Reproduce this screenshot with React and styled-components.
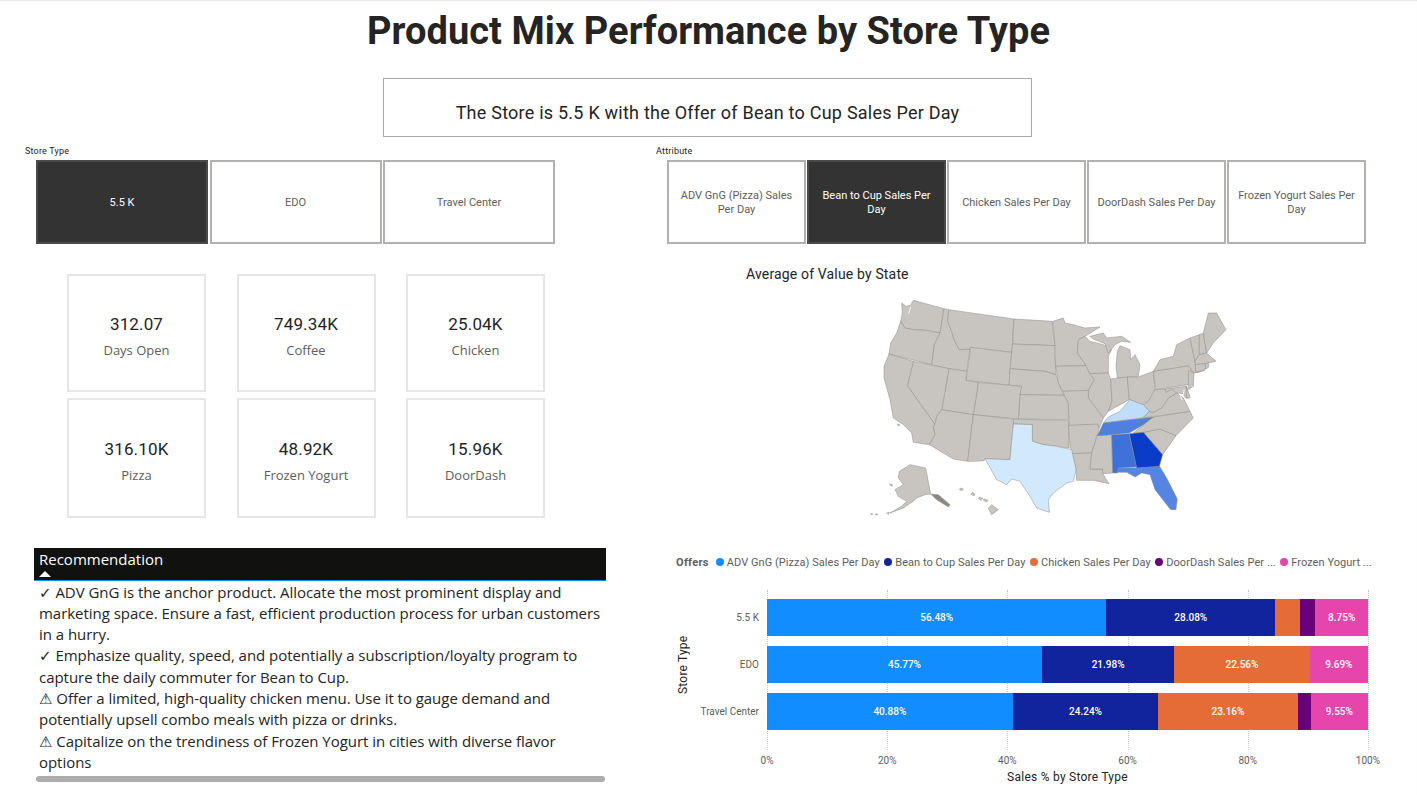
import React from "react";
import styled, { createGlobalStyle } from "styled-components";

const din = `"Roboto", "Liberation Sans", sans-serif`;
const segoe = `"Open Sans", "Noto Sans", "DejaVu Sans", sans-serif`;

const Global = createGlobalStyle`
  html, body { margin: 0; padding: 0; background: #fff; }
  body { font-family: ${din}; overflow: hidden; }
`;

const Page = styled.div`
  width: 1417px;
  height: 795px;
  overflow: hidden;
  background: #fff;
  box-shadow: inset 0 2px 2px -1px #e4e4e4;
`;
const Title = styled.h1`
  margin: 0;
  height: 78px;
  padding-top: 9px;
  box-sizing: border-box;
  text-align: center;
  font-size: 38px;
  line-height: 45px;
  font-weight: 700;
  letter-spacing: 0.05px;
  color: #252423;
`;
const Banner = styled.div`
  width: 649px;
  height: 59px;
  box-sizing: border-box;
  margin-left: 383px;
  border: 1px solid #aaa8a6;
  padding-top: 24px;
  text-align: center;
  font-size: 18px;
  line-height: 20px;
  letter-spacing: 0.23px;
  color: #252423;
`;
const Columns = styled.div`
  display: grid;
  grid-template-columns: 631px 1fr;
  padding-top: 9px;
`;
const LeftCol = styled.div`
  padding-left: 25px;
`;
const RightCol = styled.div`
  padding-left: 25px;
`;
const SlicerLabel = styled.div`
  height: 14px;
  font-size: 9px;
  line-height: 10px;
  letter-spacing: 0.2px;
  box-sizing: border-box;
  color: #252423;
`;
const SlicerRow = styled.div`
  display: flex;
  gap: ${(p) => p.$gap}px;
  margin-left: 11px;
`;
const SlicerButton = styled.div`
  width: ${(p) => p.$w}px;
  height: 84px;
  box-sizing: border-box;
  border: 2px solid #b3b1af;
  display: flex;
  align-items: center;
  justify-content: center;
  text-align: center;
  padding: 2px 6px 0;
  font-size: 11px;
  line-height: 14px;
  background: ${(p) => (p.$on ? "#333333" : "#fff")};
  border-color: ${(p) => (p.$on ? "#4a4a4a" : "#b3b1af")};
  color: ${(p) => (p.$on ? "#fff" : "#605e5c")};
`;
const KpiGrid = styled.div`
  display: grid;
  grid-template-columns: 139px 139px 139px;
  grid-template-rows: 118px 120px;
  column-gap: 30.5px;
  row-gap: 6px;
  margin: 30px 0 0 42px;
`;
const KpiCard = styled.div`
  box-sizing: border-box;
  border: 2px solid #e6e6e6;
  padding-top: 6px;
  display: flex;
  flex-direction: column;
  align-items: center;
  justify-content: center;
`;
const KpiValue = styled.div`
  font-size: 17px;
  line-height: 24px;
  letter-spacing: 0.15px;
  color: #252423;
`;
const KpiName = styled.div`
  font-family: ${segoe};
  font-size: 13px;
  line-height: 20px;
  margin-top: 4px;
  color: #605e5c;
`;
const Recommend = styled.section`
  width: 572px;
  margin: 30px 0 0 9px;
`;
const RecHead = styled.div`
  height: 33px;
  box-sizing: border-box;
  background: #111110;
  border-bottom: 1px solid #118dff;
  padding: 2px 0 0 5px;
  font-family: ${segoe};
  font-size: 15px;
  line-height: 18px;
  color: #fff;
`;
const Caret = styled.div`
  width: 0;
  height: 0;
  margin: 3px 0 0 0;
  border-left: 6px solid transparent;
  border-right: 6px solid transparent;
  border-bottom: 6px solid #fff;
`;
const RecBody = styled.div`
  padding: 0.5px 0 0 5px;
  font-family: ${segoe};
  font-size: 15px;
  line-height: 21.3px;
  letter-spacing: -0.04px;
  color: #252423;
`;
const RecLine = styled.div``;
const ScrollTrack = styled.div`
  height: 6px;
  margin: 3px 1px 0 2px;
  border-radius: 3px;
  background: #adadad;
`;
const MapTitle = styled.div`
  margin: 22px 0 0 90px;
  height: 16px;
  font-size: 14px;
  line-height: 16px;
  letter-spacing: 0.16px;
  color: #252423;
`;
const MapWrap = styled.div`
  margin-left: 184px;
  padding-top: 1px;
  height: 252px;
`;
const Chart = styled.section`
  margin-top: 13px;
  font-size: 11px;
  color: #605e5c;
`;
const Legend = styled.div`
  display: flex;
  align-items: center;
  height: 28px;
  margin-bottom: 14px;
  padding-left: 20px;
  white-space: nowrap;
  letter-spacing: 0.05px;
`;
const LegendTitle = styled.span`
  font-weight: 700;
  letter-spacing: 0.3px;
  margin-right: 7px;
`;
const LegendItem = styled.span`
  display: flex;
  align-items: center;
  gap: 3px;
  margin-right: 4.5px;
`;
const Dot = styled.i`
  width: 8px;
  height: 8px;
  border-radius: 50%;
  background: ${(p) => p.$c};
`;
const ChartBody = styled.div`
  display: grid;
  grid-template-columns: 111px 601px;
  height: 160px;
`;
const YSide = styled.div`
  display: flex;
`;
const YTitle = styled.div`
  writing-mode: vertical-rl;
  transform: rotate(180deg);
  width: 14px;
  margin-left: 20px;
  height: 150px;
  text-align: center;
  font-size: 12px;
  letter-spacing: 0.2px;
  color: #252423;
`;
const Categories = styled.div`
  flex: 1;
  display: flex;
  flex-direction: column;
  gap: 10px;
  padding: 9px 8px 0 0;
  font-size: 10px;
`;
const Category = styled.div`
  height: 37px;
  line-height: 37px;
  text-align: right;
`;
const Plot = styled.div`
  position: relative;
  display: flex;
  flex-direction: column;
  gap: 10px;
  padding-top: 9px;
`;
const GridLine = styled.div`
  position: absolute;
  top: 0;
  bottom: 0;
  border-left: 1px dotted #c8c6c4;
`;
const Bar = styled.div`
  position: relative;
  display: flex;
  height: 37px;
`;
const Segment = styled.div`
  display: flex;
  align-items: center;
  justify-content: center;
  background: ${(p) => p.$c};
  color: #fff;
  font-size: 10px;
  font-weight: 500;
`;
const Ticks = styled.div`
  display: flex;
  justify-content: space-between;
  margin: 4px 0 0 111px;
  width: 601px;
  height: 14px;
  line-height: 14px;
  font-size: 10px;
`;
const Tick = styled.span`
  width: 0;
  display: flex;
  justify-content: center;
  white-space: nowrap;
`;
const XTitle = styled.div`
  width: 601px;
  margin: 1px 0 0 111px;
  text-align: center;
  font-size: 12px;
  line-height: 16px;
  letter-spacing: 0.25px;
  color: #252423;
`;

const GRAY = "#c8c5c0";
const poly = (s) => "M" + s.trim().split(/\s+/).join("L") + "Z";
const states = [
  ["185,60 198,70 212,67 220,52 312,77 300,150 260,142 220,140 195,135 182,115 187,90"],
  ["182,115 195,135 220,140 260,142 300,150 283,185 275,245 147,213 152,180 170,150"],
  ["312,77 326,80 323,115 335,145 342,170 358,200 390,198 380,265 327,257 275,245 283,185 300,150"],
  ["326,80 522,108 515,208 392,193 390,198 358,200 342,170 335,145 323,115"],
  ["392,193 515,208 507,307 378,292"],
  ["522,108 637,115 640,155 647,188 518,183"],
  ["518,183 647,188 643,210 647,250 648,275 615,265 570,262 510,257"],
  ["510,257 570,262 615,265 648,275 655,295 665,323 673,337 540,335 544,310 507,307"],
  ["540,335 673,337 685,360 685,410 535,408"],
  ["520,408 687,413 687,495 650,490 610,485 577,475 577,425 520,423"],
  ["415,298 544,310 540,335 535,408 400,395"],
  ["327,257 380,265 378,292 415,298 400,395 305,380"],
  ["220,235 327,257 305,380 290,400 285,425 202,308"],
  ["147,213 220,235 202,308 285,425 280,430 285,455 268,485 220,478 215,450 190,425 160,405 150,350 132,285 132,250"],
  ["305,380 400,395 383,535 340,528 268,485 285,455 280,430 285,425 290,400"],
  ["400,395 520,408 520,423 510,530 435,527 432,533 400,535 383,535"],
  ["638,115 670,105 675,120 700,125 735,135 780,132 735,160 715,170 712,210 730,235 738,248 647,250 645,185"],
  ["647,250 738,248 750,275 763,290 745,322 668,325 655,300"],
  ["715,170 735,160 750,175 790,185 815,200 805,220 805,270 750,272 738,248 730,235 712,210"],
  ["750,160 790,150 800,165 845,160 872,178 845,175 825,185 805,210 795,182 760,168"],
  ["840,188 832,205 828,250 832,285 895,280 900,245 885,215 872,230 870,200"],
  ["750,272 805,270 812,288 816,355 805,385 790,405 770,385 745,345 745,322 763,290"],
  ["812,288 862,282 868,350 840,365 805,385 816,355"],
  ["862,282 895,282 940,265 945,320 925,355 905,365 868,350"],
  ["668,325 745,322 745,345 775,385 790,405 778,435 772,425 688,428 685,360 673,337"],
  ["685,427 772,423 778,435 755,510 697,512 690,490"],
  ["697,512 755,510 750,558 788,558 790,575 807,602 760,592 710,592 708,555"],
  ["772,458 815,455 818,570 788,572 788,558 750,558 755,510"],
  ["910,448 960,438 1008,458 968,515"],
  ["910,425 940,402 1050,385 1060,405 1008,458 960,438 910,448 880,450"],
  ["908,405 928,385 940,388 965,375 985,345 1010,330 1030,345 1050,385"],
  ["945,320 975,318 978,328 995,318 1010,330 985,345 965,375 940,388 925,385 910,365 925,355"],
  ["975,318 1040,310 1048,345 1035,345 1030,332 1010,330 995,318 978,328"],
  ["1038,310 1048,335 1050,345 1040,345"],
  ["940,265 1045,248 1062,270 1045,305 947,320"],
  ["960,230 1000,220 1010,185 1050,165 1065,235 1068,270 1095,262 1062,270 1045,248 940,265"],
  ["1046,262 1062,270 1060,310 1045,320 1045,300"],
  ["1050,165 1078,155 1078,215 1065,235"],
  ["1078,155 1090,150 1100,210 1078,215"],
  ["1090,150 1105,90 1130,90 1158,140 1120,180 1100,210"],
  ["1065,235 1078,215 1100,210 1128,235 1105,240 1066,245"],
  ["1066,245 1095,242 1098,258 1068,268"],
  ["1095,242 1106,240 1106,252 1098,258"],
  ["178,565 210,545 257,555 272,633 255,635 230,645 220,655 190,675 150,690 185,670 200,655 175,640 165,620 190,605 175,585"],
  ["272,633 295,635 330,665 325,672 290,650", "#8a8784"],
  ["445,675 455,665 475,680 455,695"],
  ["362,615 370,618 366,623 358,620"],
  ["397,628 405,634 402,638 393,634"],
  ["418,642 428,646 424,652 416,647"],
  ["432,648 444,652 440,657 430,652"],
  ["148,602 158,606 155,611"],
  ["172,423 180,426 176,429"],
  ["140,690 148,688 146,694"],
  ["92,692 98,692 95,696"],
  ["106,693 114,693 111,697"],
  ["520,423 577,425 577,475 610,485 650,490 695,500 708,560 700,595 680,600 640,630 625,650 628,688 590,675 570,640 540,595 515,588 500,605 470,590 435,527 510,530", "#d2e9fd"],
  ["790,420 805,402 840,385 870,350 895,360 910,365 928,385 908,405", "#bfdcf9"],
  ["772,458 790,420 940,402 910,425 868,450 815,455", "#4f80e0"],
  ["815,455 868,452 890,552 838,555 832,570 818,570", "#3f72d8"],
  ["835,555 890,555 958,548 980,585 1012,648 1008,680 992,680 945,620 930,575 905,570 885,582 860,568 832,568", "#5585e3"],
  ["868,452 910,448 968,515 958,550 890,555", "#0a3cc8"],
];
const waters = [
  "M212,72L206,92",
  "M1032,320L1030,338L1038,352",
  "M1020,335L1026,350",
];

const UsMap = () => (
  <svg width="400" height="240" viewBox="0 0 1200 720" aria-label="Map">
    {states.map(([d, fill], i) => (
      <path key={i} d={poly(d)} fill={fill || GRAY} stroke="#93908c" strokeWidth="1.6" strokeLinejoin="round" />
    ))}
    {waters.map((d) => (
      <path key={d} d={d} fill="none" stroke="#fff" strokeWidth="2.4" strokeLinecap="round" />
    ))}
  </svg>
);

const COLORS = ["#118dff", "#12239e", "#e66c37", "#6b007b", "#e645ab"];
const rows = [
  { name: "5.5 K", v: [56.48, 28.08, 4.13, 2.56, 8.75], show: [1, 1, 0, 0, 1] },
  { name: "EDO", v: [45.77, 21.98, 22.56, 0, 9.69], show: [1, 1, 1, 0, 1] },
  { name: "Travel Center", v: [40.88, 24.24, 23.16, 2.17, 9.55], show: [1, 1, 1, 0, 1] },
];
const legend = [
  "ADV GnG (Pizza) Sales Per Day",
  "Bean to Cup Sales Per Day",
  "Chicken Sales Per Day",
  "DoorDash Sales Per ...",
  "Frozen Yogurt ...",
];
const kpis = [
  ["312.07", "Days Open"],
  ["749.34K", "Coffee"],
  ["25.04K", "Chicken"],
  ["316.10K", "Pizza"],
  ["48.92K", "Frozen Yogurt"],
  ["15.96K", "DoorDash"],
];
const rec = [
  "✓ ADV GnG is the anchor product. Allocate the most prominent display and marketing space. Ensure a fast, efficient production process for urban customers in a hurry.",
  "✓ Emphasize quality, speed, and potentially a subscription/loyalty program to capture the daily commuter for Bean to Cup.",
  "⚠ Offer a limited, high-quality chicken menu. Use it to gauge demand and potentially upsell combo meals with pizza or drinks.",
  "⚠ Capitalize on the trendiness of Frozen Yogurt in cities with diverse flavor options",
];
const ticks = [0, 20, 40, 60, 80, 100];

export default function App() {
  return (
    <Page>
      <Global />
      <Title>Product Mix Performance by Store Type</Title>
      <Banner>The Store is 5.5 K with the Offer of Bean to Cup Sales Per Day</Banner>
      <Columns>
        <LeftCol>
          <SlicerLabel>Store Type</SlicerLabel>
          <SlicerRow $gap={1.5}>
            <SlicerButton $w={172} $on>5.5 K</SlicerButton>
            <SlicerButton $w={172}>EDO</SlicerButton>
            <SlicerButton $w={172}>Travel Center</SlicerButton>
          </SlicerRow>
          <KpiGrid>
            {kpis.map(([v, n]) => (
              <KpiCard key={n}>
                <KpiValue>{v}</KpiValue>
                <KpiName>{n}</KpiName>
              </KpiCard>
            ))}
          </KpiGrid>
          <Recommend>
            <RecHead>
              Recommendation
              <Caret />
            </RecHead>
            <RecBody>
              {rec.map((t) => (
                <RecLine key={t}>{t}</RecLine>
              ))}
            </RecBody>
            <ScrollTrack />
          </Recommend>
        </LeftCol>
        <RightCol>
          <SlicerLabel>Attribute</SlicerLabel>
          <SlicerRow $gap={1}>
            <SlicerButton $w={139}>ADV GnG (Pizza) Sales Per Day</SlicerButton>
            <SlicerButton $w={139} $on>Bean to Cup Sales Per Day</SlicerButton>
            <SlicerButton $w={139}>Chicken Sales Per Day</SlicerButton>
            <SlicerButton $w={139}>DoorDash Sales Per Day</SlicerButton>
            <SlicerButton $w={139}>Frozen Yogurt Sales Per Day</SlicerButton>
          </SlicerRow>
          <MapTitle>Average of Value by State</MapTitle>
          <MapWrap>
            <UsMap />
          </MapWrap>
          <Chart>
            <Legend>
              <LegendTitle>Offers</LegendTitle>
              {legend.map((l, i) => (
                <LegendItem key={l}>
                  <Dot $c={COLORS[i]} />
                  {l}
                </LegendItem>
              ))}
            </Legend>
            <ChartBody>
              <YSide>
                <YTitle>Store Type</YTitle>
                <Categories>
                  {rows.map((r) => (
                    <Category key={r.name}>{r.name}</Category>
                  ))}
                </Categories>
              </YSide>
              <Plot>
                {ticks.map((t) => (
                  <GridLine key={t} style={{ left: `${t}%` }} />
                ))}
                {rows.map((r) => (
                  <Bar key={r.name}>
                    {r.v.map((x, i) =>
                      x > 0 ? (
                        <Segment key={i} $c={COLORS[i]} style={{ width: `${x}%` }}>
                          {r.show[i] ? `${x.toFixed(2)}%` : ""}
                        </Segment>
                      ) : null
                    )}
                  </Bar>
                ))}
              </Plot>
            </ChartBody>
            <Ticks>
              {ticks.map((t) => (
                <Tick key={t}>{t}%</Tick>
              ))}
            </Ticks>
            <XTitle>Sales % by Store Type</XTitle>
          </Chart>
        </RightCol>
      </Columns>
    </Page>
  );
}
